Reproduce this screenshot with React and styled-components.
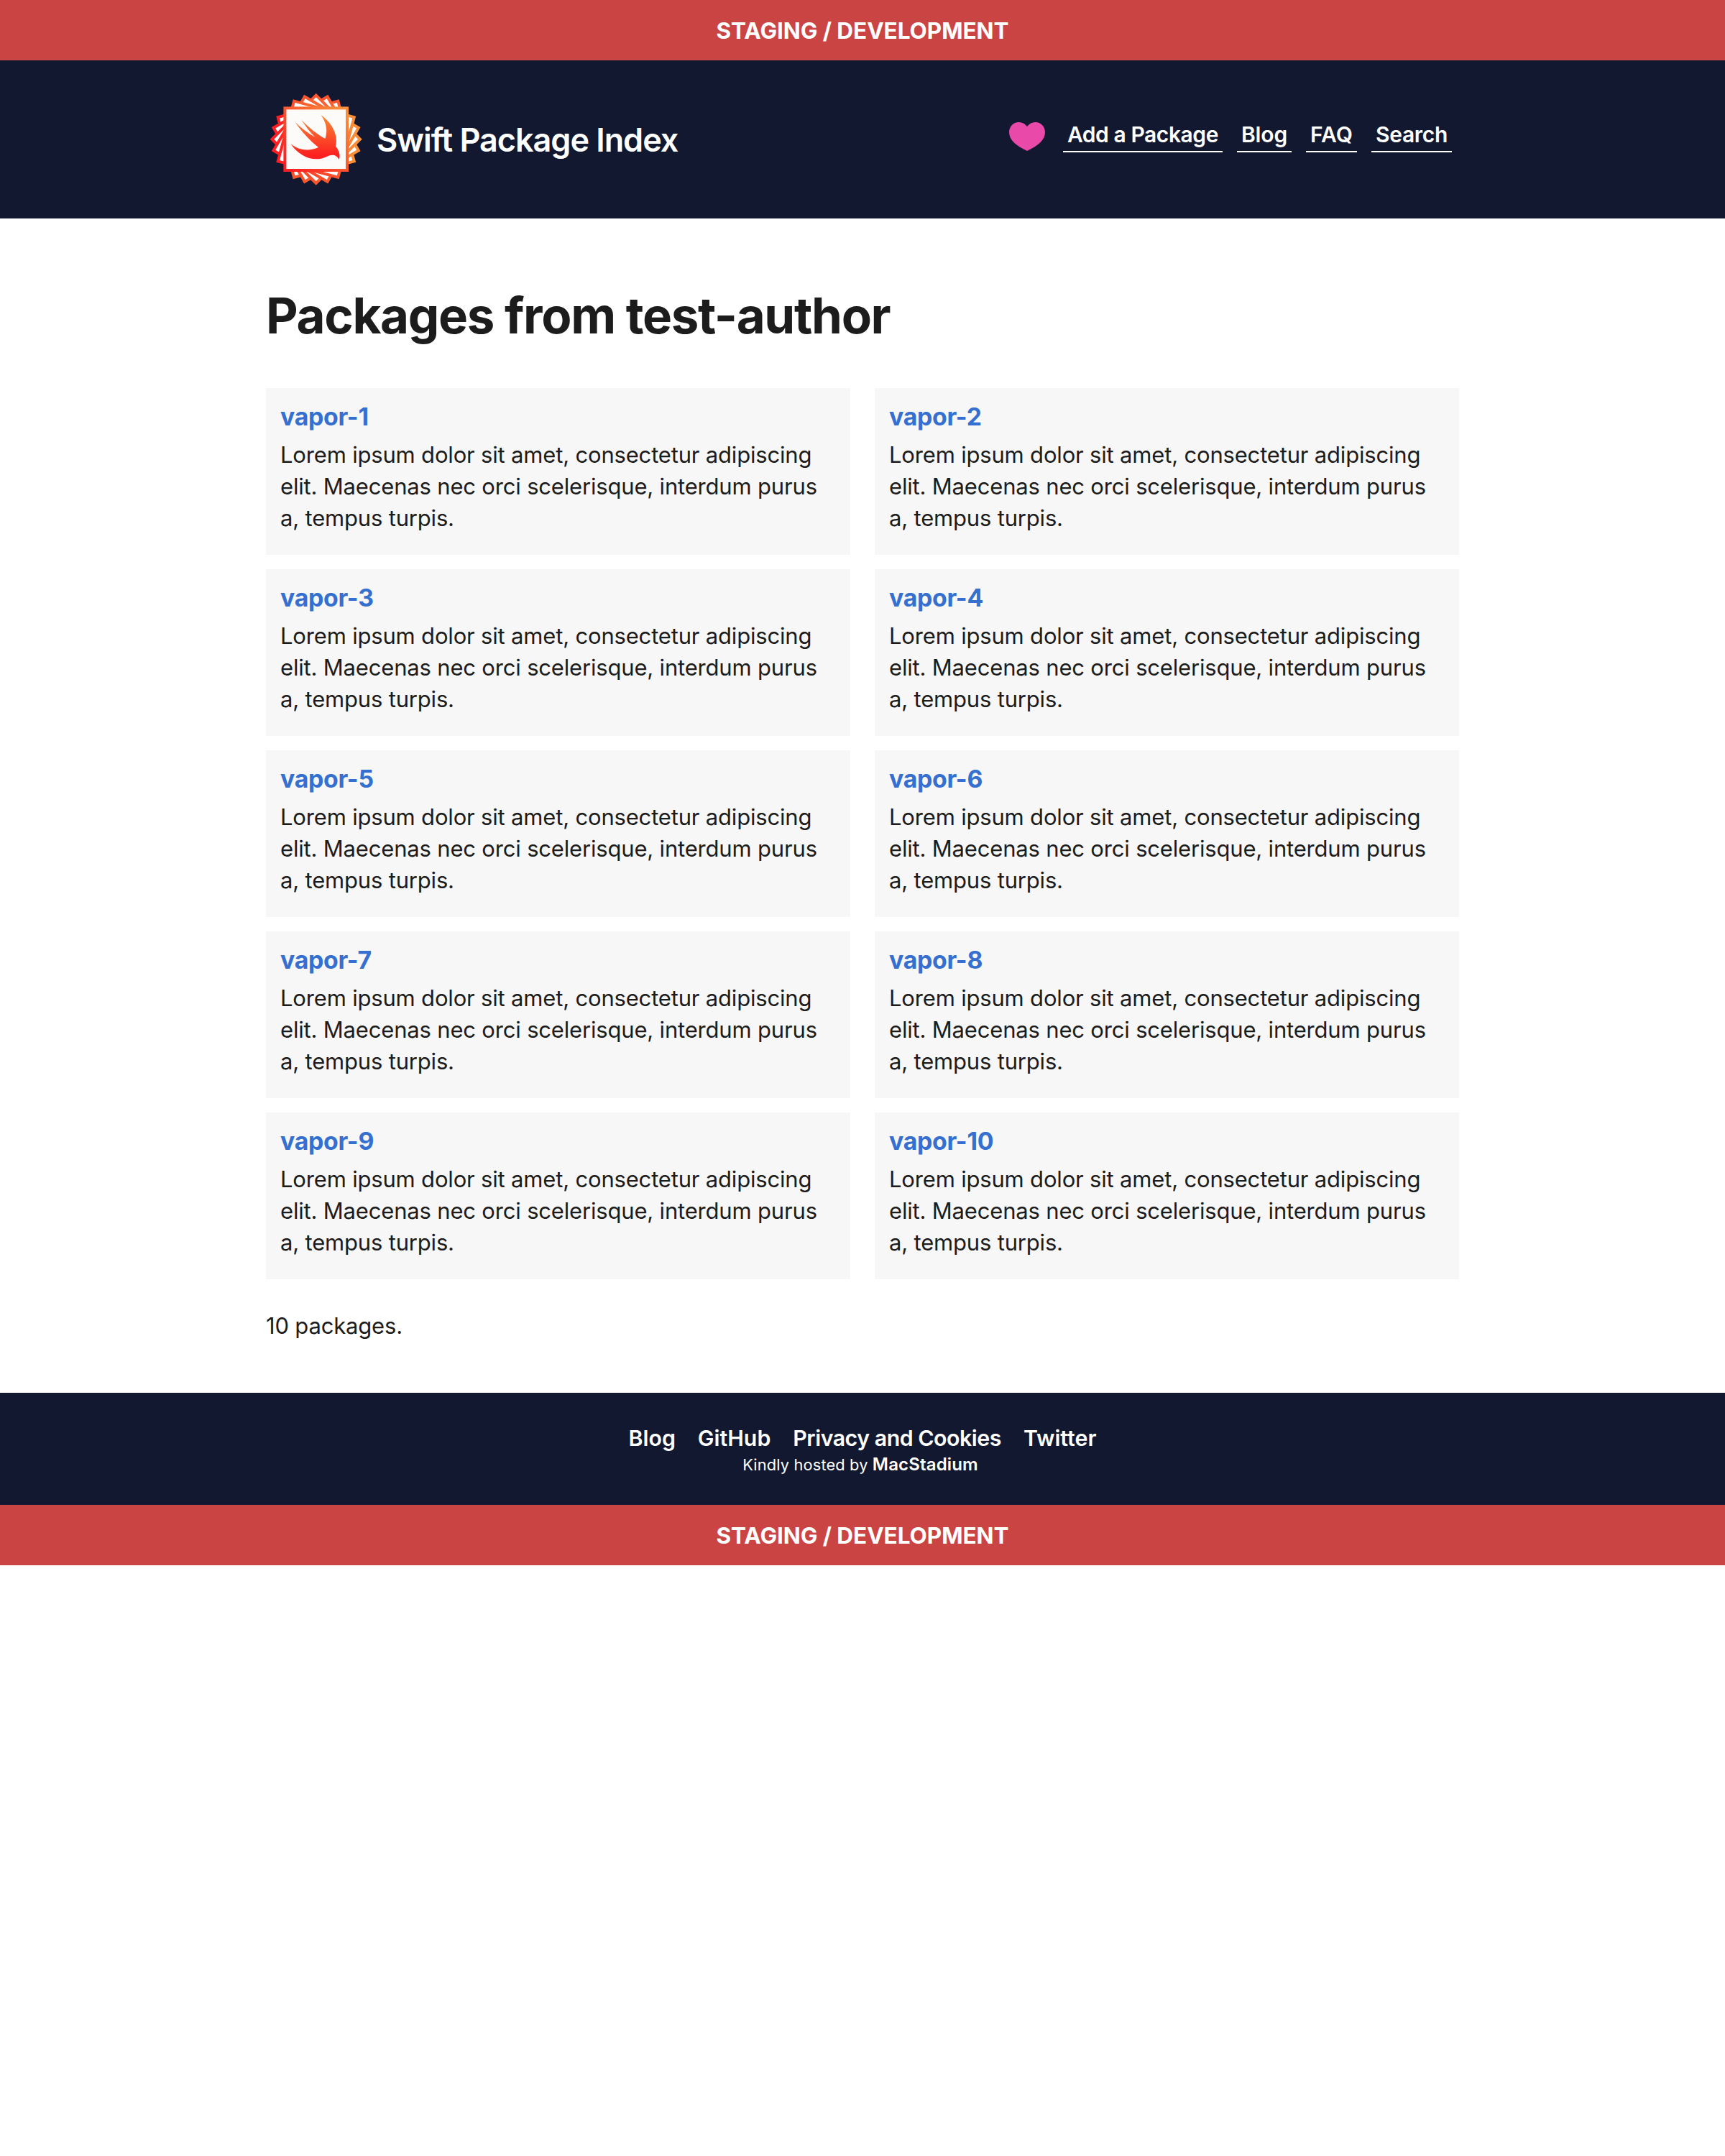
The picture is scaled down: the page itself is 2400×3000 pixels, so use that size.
import React from "react";
import styled, { createGlobalStyle } from "styled-components";

const GlobalStyle = createGlobalStyle`
  *, *::before, *::after { box-sizing: border-box; }
  body {
    margin: 0;
    background: #fff;
    color: #1c1c1c;
    font: 400 31px/44px Inter, "Liberation Sans", sans-serif;
    -webkit-font-smoothing: antialiased;
  }
  h1, h4, p, ul { margin: 0; padding: 0; }
  ul { list-style: none; }
  a { color: inherit; text-decoration: none; }
`;

const EnvironmentBanner = styled.div`
  height: 84px;
  padding-top: 1px;
  background: #cb4444;
  color: #fff;
  font-size: 31.5px;
  font-weight: 700;
  line-height: 84px;
  letter-spacing: -0.05px;
  text-align: center;
`;

const Container = styled.div`
  width: 1660px;
  margin: 0 auto;
`;

const Header = styled.header`
  background: #111830;
  color: #fff;
`;

const HeaderInner = styled(Container)`
  display: flex;
  align-items: center;
  justify-content: space-between;
  height: 220px;
`;

const Brand = styled.a`
  display: flex;
  align-items: center;
  gap: 14px;
  font-size: 45px;
  font-weight: 600;
  line-height: 60px;
  letter-spacing: -1.06px;
`;

const BrandName = styled.span`
  padding-top: 2px;
`;

const LogoImage = styled.svg`
  display: block;
  width: 140px;
  height: 140px;
`;

const Nav = styled.nav`
  display: flex;
  align-items: flex-start;
  padding: 0 10px 7px 0;
`;

const HeartIcon = styled.svg`
  display: block;
  width: 50px;
  height: 40px;
  margin: 1px 25px 0 0;
`;

const NavList = styled.ul`
  display: flex;
  gap: 20px;
`;

const NavLink = styled.a`
  display: block;
  padding: 0 6px 5px;
  border-bottom: 2px solid #fff;
  font-size: 30px;
  font-weight: 600;
  line-height: 36px;
  letter-spacing: ${({ $tracking }) => $tracking}px;
`;

const Main = styled(Container).attrs({ as: "main" })`
  padding: 93px 0 71px;
`;

const Title = styled.h1`
  margin-bottom: 59px;
  font-size: 69px;
  font-weight: 700;
  line-height: 84px;
  letter-spacing: -1.36px;
`;

const PackageGrid = styled.ul`
  display: grid;
  grid-template-columns: 1fr 1fr;
  gap: 20px 34px;
  margin-bottom: 43px;
`;

const PackageCard = styled.a`
  display: block;
  padding: 19px 20px 29px;
  background: #f7f7f7;
`;

const PackageName = styled.h4`
  margin-bottom: 10px;
  color: #356fd0;
  font-size: 33.8px;
  font-weight: 700;
  line-height: 42px;
  letter-spacing: -0.25px;
`;

const Text = styled.p`
  letter-spacing: -0.18px;
`;

const Footer = styled.footer`
  display: flex;
  flex-direction: column;
  align-items: center;
  gap: 3px;
  padding: 45px 0 40px;
  background: #111830;
  color: #fff;
`;

const FooterLinks = styled.ul`
  display: flex;
  gap: 31px;
`;

const FooterLink = styled.a`
  display: block;
  font-size: 30.3px;
  font-weight: 600;
  line-height: 36px;
  letter-spacing: ${({ $tracking }) => $tracking}px;
`;

const Hosting = styled.small`
  display: block;
  height: 32px;
  font-size: 21.8px;
  line-height: 32px;
  letter-spacing: 0.15px;
  padding-right: 6px;

  a {
    font-size: 24px;
    font-weight: 600;
    line-height: 1;
    letter-spacing: 0.15px;
  }
`;

const Logo = () => (
  <LogoImage viewBox="-69.7 -69.7 140 140" aria-hidden="true">
    <defs>
      <linearGradient id="frame" x1="0" y1="1" x2="1" y2="0">
        <stop offset="0.05" stopColor="#fd1d22" />
        <stop offset="0.95" stopColor="#f88e38" />
      </linearGradient>
      <linearGradient id="bird" x1="0" y1="0" x2="0" y2="1">
        <stop offset="0" stopColor="#f88a36" />
        <stop offset="0.9" stopColor="#fd2020" />
      </linearGradient>
    </defs>
    {[75, 60, 45, 30, 15, 0].map((angle) => (
      <rect
        key={angle}
        x="-43.3"
        y="-43.3"
        width="86.6"
        height="86.6"
        fill={angle ? "#fff" : "#fdfbfa"}
        stroke="url(#frame)"
        strokeWidth="4"
        transform={`rotate(${angle})`}
      />
    ))}
    <path
      fill="url(#bird)"
      transform="scale(.3333) translate(-239 -251)"
      d="M260 151C300 178 334 230 321 281C337 299 341 320 335 336C323 312 302 315 285 323C235 349 172 328 133 270C168 300 214 301 249 285C212 256 181 222 152 180C177 205 206 227 235 242C213 220 195 197 178 170C206 201 242 229 277 249C289 217 282 182 260 151Z"
    />
  </LogoImage>
);

const Heart = () => (
  <HeartIcon viewBox="0 0 50 40" aria-label="Sponsor">
    <path
      fill="#e94aaa"
      d="M25 6C22 2 18 0 13.5 0C6 0 0 6 0 14C0 25 10 33 25 40C40 33 50 25 50 14C50 6 44 0 36.5 0C32 0 28 2 25 6Z"
    />
  </HeartIcon>
);

const navItems = [
  { label: "Add a Package", tracking: -0.44 },
  { label: "Blog", tracking: -0.15 },
  { label: "FAQ", tracking: 0.1 },
  { label: "Search", tracking: -0.32 },
];

const footerItems = [
  { label: "Blog", tracking: 0 },
  { label: "GitHub", tracking: 0 },
  { label: "Privacy and Cookies", tracking: -0.48 },
  { label: "Twitter", tracking: 0 },
];

const summary =
  "Lorem ipsum dolor sit amet, consectetur adipiscing elit. Maecenas nec orci scelerisque, interdum purus a, tempus turpis.";

const packages = Array.from({ length: 10 }, (_, i) => `vapor-${i + 1}`);

export default function App() {
  return (
    <>
      <GlobalStyle />
      <EnvironmentBanner>STAGING / DEVELOPMENT</EnvironmentBanner>
      <Header>
        <HeaderInner>
          <Brand href="#">
            <Logo />
            <BrandName>Swift Package Index</BrandName>
          </Brand>
          <Nav>
            <Heart />
            <NavList>
              {navItems.map(({ label, tracking }) => (
                <li key={label}>
                  <NavLink href="#" $tracking={tracking}>{label}</NavLink>
                </li>
              ))}
            </NavList>
          </Nav>
        </HeaderInner>
      </Header>
      <Main>
        <Title>Packages from test-author</Title>
        <PackageGrid>
          {packages.map((name) => (
            <li key={name}>
              <PackageCard href="#">
                <PackageName>{name}</PackageName>
                <Text>{summary}</Text>
              </PackageCard>
            </li>
          ))}
        </PackageGrid>
        <Text>{packages.length} packages.</Text>
      </Main>
      <Footer>
        <FooterLinks>
          {footerItems.map(({ label, tracking }) => (
            <li key={label}>
              <FooterLink href="#" $tracking={tracking}>{label}</FooterLink>
            </li>
          ))}
        </FooterLinks>
        <Hosting>
          Kindly hosted by <a href="#">MacStadium</a>
        </Hosting>
      </Footer>
      <EnvironmentBanner>STAGING / DEVELOPMENT</EnvironmentBanner>
    </>
  );
}
